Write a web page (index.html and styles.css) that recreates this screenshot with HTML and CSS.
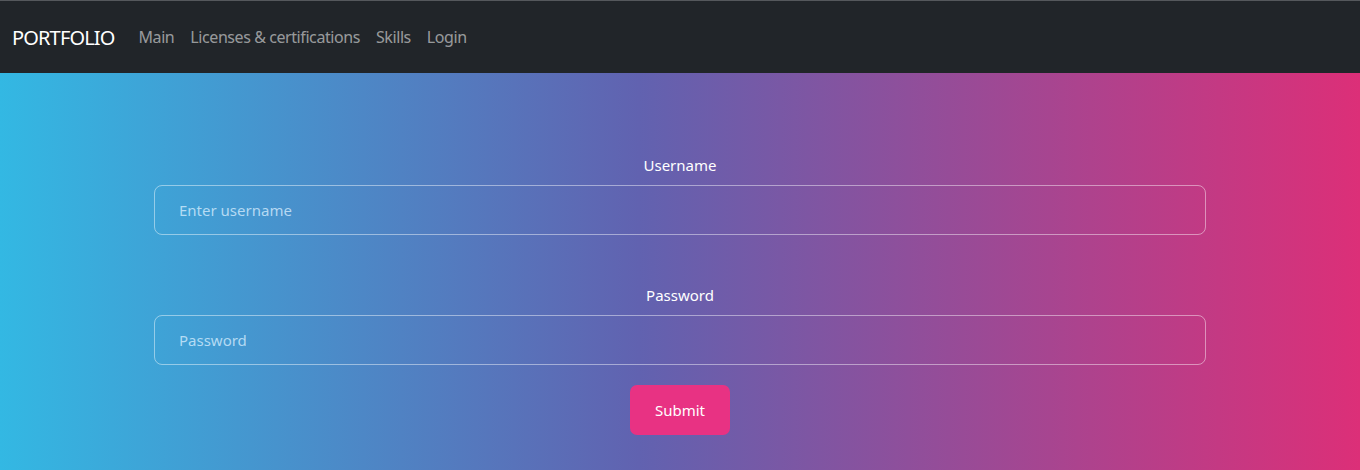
FILE: index.html
```html
<!DOCTYPE html>
<html lang="en">
<head>
<meta charset="utf-8">
<title>Portfolio - Login</title>
<link rel="stylesheet" href="styles.css">
</head>
<body>
<nav class="navbar">
  <a class="brand" href="#">PORTFOLIO</a>
  <ul class="nav">
    <li><a class="nav-link" href="#">Main</a></li>
    <li><a class="nav-link" href="#">Licenses &amp; certifications</a></li>
    <li><a class="nav-link" href="#">Skills</a></li>
    <li><a class="nav-link" href="#">Login</a></li>
  </ul>
</nav>
<main class="hero">
  <form class="login-form">
    <div class="field">
      <label class="label" for="username">Username</label>
      <input class="input" id="username" type="text" placeholder="Enter username">
    </div>
    <div class="field">
      <label class="label" for="password">Password</label>
      <input class="input" id="password" type="password" placeholder="Password">
    </div>
    <button class="submit" type="button">Submit</button>
  </form>
</main>
</body>
</html>
```

FILE: styles.css
```css
* { box-sizing: border-box; }
html, body { margin: 0; padding: 0; height: 100%; }
body {
  font-family: "Segoe UI", "Noto Sans", "Open Sans", sans-serif;
  font-size: 16px;
  background: #212529;
  overflow: hidden;
}
.navbar {
  height: 73px;
  background: #212529;
  border-top: 1px solid #55585c;
  display: flex;
  align-items: center;
  padding: 0 12px;
}
.brand {
  color: #fff;
  font-size: 20px;
  text-decoration: none;
  margin-right: 16px;
  letter-spacing: -0.85px;
}
.nav {
  list-style: none;
  margin: 0;
  padding: 0;
  display: flex;
}
.nav-link {
  display: block;
  padding: 8px 8px;
  color: rgba(255,255,255,0.55);
  text-decoration: none;
  font-size: 16px;
  letter-spacing: -0.42px;
}
.hero {
  height: calc(100% - 73px);
  background: linear-gradient(to right, #33b8e3 0%, #6162b0 47%, #dc2f78 100%);
  padding-top: 82px;
}
.login-form {
  width: 1052px;
  margin: 0 auto;
  display: flex;
  flex-direction: column;
  align-items: center;
}
.field {
  width: 100%;
  display: flex;
  flex-direction: column;
  align-items: center;
  margin-bottom: 20px;
}
.field + .field { margin-top: 30px; }
.label {
  color: #fff;
  font-size: 15px;
  line-height: 20px;
  margin-bottom: 10px;
}
.input {
  width: 100%;
  height: 50px;
  border: 1px solid rgba(255,255,255,0.45);
  border-radius: 8px;
  background: transparent;
  padding: 0 24px;
  font-family: inherit;
  font-size: 15px;
  color: #fff;
  outline: none;
}
.input::placeholder { color: rgba(220,240,255,0.75); }
.submit {
  width: 100px;
  height: 50px;
  border: none;
  border-radius: 7px;
  background: #e83283;
  color: #fff;
  font-family: inherit;
  font-size: 15px;
  cursor: pointer;
}
```
